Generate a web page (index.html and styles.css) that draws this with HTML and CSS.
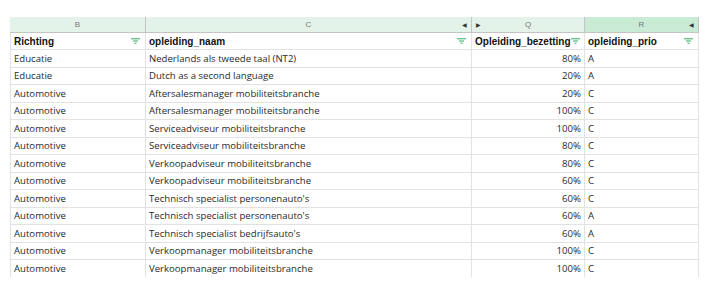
FILE: index.html
```html
<!DOCTYPE html>
<html>
<head>
<meta charset="utf-8">
<link rel="stylesheet" href="styles.css">
</head>
<body>
<div class="sheet">
  <div class="colhead">
    <div class="ch">B</div>
    <div class="ch ch-c">C<span class="arr arr-l">&#9664;</span></div>
    <div class="ch ch-q"><span class="arr arr-r">&#9654;</span>Q</div>
    <div class="ch ch-r sel">R<span class="arr arr-l">&#9664;</span></div>
  </div>
  <div class="row hdr">
    <div class="cell">Richting<svg class="flt" viewBox="0 0 9 6"><rect x="0" y="0" width="9" height="1.4"/><rect x="2" y="2.3" width="5" height="1.4"/><rect x="3.5" y="4.6" width="2" height="1.4"/></svg></div>
    <div class="cell">opleiding_naam<svg class="flt" viewBox="0 0 9 6"><rect x="0" y="0" width="9" height="1.4"/><rect x="2" y="2.3" width="5" height="1.4"/><rect x="3.5" y="4.6" width="2" height="1.4"/></svg></div>
    <div class="cell">Opleiding_bezetting<svg class="flt" viewBox="0 0 9 6"><rect x="0" y="0" width="9" height="1.4"/><rect x="2" y="2.3" width="5" height="1.4"/><rect x="3.5" y="4.6" width="2" height="1.4"/></svg></div>
    <div class="cell">opleiding_prio<svg class="flt" viewBox="0 0 9 6"><rect x="0" y="0" width="9" height="1.4"/><rect x="2" y="2.3" width="5" height="1.4"/><rect x="3.5" y="4.6" width="2" height="1.4"/></svg></div>
  </div>
  <div class="row"><div class="cell">Educatie</div><div class="cell">Nederlands als tweede taal (NT2)</div><div class="cell num">80%</div><div class="cell">A</div></div>
  <div class="row"><div class="cell">Educatie</div><div class="cell">Dutch as a second language</div><div class="cell num">20%</div><div class="cell">A</div></div>
  <div class="row"><div class="cell">Automotive</div><div class="cell">Aftersalesmanager mobiliteitsbranche</div><div class="cell num">20%</div><div class="cell">C</div></div>
  <div class="row"><div class="cell">Automotive</div><div class="cell">Aftersalesmanager mobiliteitsbranche</div><div class="cell num">100%</div><div class="cell">C</div></div>
  <div class="row"><div class="cell">Automotive</div><div class="cell">Serviceadviseur mobiliteitsbranche</div><div class="cell num">100%</div><div class="cell">C</div></div>
  <div class="row"><div class="cell">Automotive</div><div class="cell">Serviceadviseur mobiliteitsbranche</div><div class="cell num">80%</div><div class="cell">C</div></div>
  <div class="row"><div class="cell">Automotive</div><div class="cell">Verkoopadviseur mobiliteitsbranche</div><div class="cell num">80%</div><div class="cell">C</div></div>
  <div class="row"><div class="cell">Automotive</div><div class="cell">Verkoopadviseur mobiliteitsbranche</div><div class="cell num">60%</div><div class="cell">C</div></div>
  <div class="row"><div class="cell">Automotive</div><div class="cell">Technisch specialist personenauto's</div><div class="cell num">60%</div><div class="cell">C</div></div>
  <div class="row"><div class="cell">Automotive</div><div class="cell">Technisch specialist personenauto's</div><div class="cell num">60%</div><div class="cell">A</div></div>
  <div class="row"><div class="cell">Automotive</div><div class="cell">Technisch specialist bedrijfsauto's</div><div class="cell num">60%</div><div class="cell">A</div></div>
  <div class="row"><div class="cell">Automotive</div><div class="cell">Verkoopmanager mobiliteitsbranche</div><div class="cell num">100%</div><div class="cell">C</div></div>
  <div class="row"><div class="cell">Automotive</div><div class="cell">Verkoopmanager mobiliteitsbranche</div><div class="cell num">100%</div><div class="cell">C</div></div>
</div>
</body>
</html>
```
FILE: styles.css
```css
html, body { margin: 0; padding: 0; background: #fff; }
body { padding: 17px 0 0 10px; font-family: "Liberation Sans", Arial, sans-serif; color: #222; }
.sheet { width: 689px; height: 260px; overflow: hidden; }
.colhead, .row { display: grid; grid-template-columns: 136px 326px 113px 114px; }
.colhead { height: 16px; background: #e3f3e9; border-bottom: 1px solid #c4c4c4; box-sizing: border-box; }
.ch { position: relative; display: flex; align-items: center; justify-content: center; font-size: 8px; color: #777; border-right: 1px solid #c4c4c4; box-sizing: border-box; }
.ch.sel { background: #c9ead5; }
.arr { position: absolute; top: 4px; font-size: 6px; color: #333; line-height: 8px; }
.arr-l { right: 4px; }
.arr-r { left: 4px; }
.row { height: 17.5px; box-sizing: border-box; border-bottom: 1px solid #e2e2e2; }
.cell { display: flex; align-items: center; font-family: "Open Sans", "Liberation Sans", sans-serif; font-size: 9.6px; color: #2a2a2a; padding: 0 3px; border-right: 1px solid #e2e2e2; white-space: nowrap; overflow: hidden; box-sizing: border-box; }
.cell.num { justify-content: flex-end; }
.hdr { height: 17px; }
.hdr .cell { font-family: "Liberation Sans", Arial, sans-serif; font-weight: bold; font-size: 10px; color: #111; justify-content: space-between; }
.flt { width: 9px; height: 6px; fill: #6cc391; flex: none; margin-right: 2px; }
.row .cell:first-child { border-left: 1px solid #e2e2e2; }
```
